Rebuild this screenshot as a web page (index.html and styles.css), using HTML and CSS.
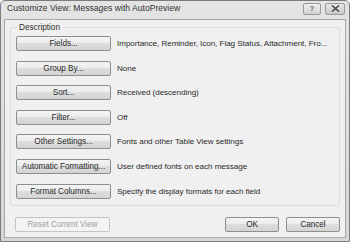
FILE: index.html
```html
<!DOCTYPE html>
<html>
<head>
<meta charset="utf-8">
<link rel="stylesheet" href="styles.css">
</head>
<body>
<div class="window">
  <div class="titlebar">
    <span class="title">Customize View: Messages with AutoPreview</span>
    <div class="caption-btns">
      <span class="cbtn help">?</span>
      <span class="cbtn close"><svg width="9" height="7" viewBox="0 0 9 7"><path d="M1 0.5 L8 6.5 M8 0.5 L1 6.5" stroke="#4a4a4a" stroke-width="1.6" fill="none"/></svg></span>
    </div>
  </div>
  <div class="client">
    <fieldset class="group">
      <legend class="legend">Description</legend>
      <div class="rows">
        <div class="row"><button class="btn">Fields...</button><span class="desc">Importance, Reminder, Icon, Flag Status, Attachment, Fro...</span></div>
        <div class="row"><button class="btn">Group By...</button><span class="desc">None</span></div>
        <div class="row"><button class="btn">Sort...</button><span class="desc">Received (descending)</span></div>
        <div class="row"><button class="btn">Filter...</button><span class="desc">Off</span></div>
        <div class="row"><button class="btn">Other Settings...</button><span class="desc">Fonts and other Table View settings</span></div>
        <div class="row"><button class="btn">Automatic Formatting...</button><span class="desc">User defined fonts on each message</span></div>
        <div class="row"><button class="btn">Format Columns...</button><span class="desc">Specify the display formats for each field</span></div>
      </div>
    </fieldset>
    <div class="footer">
      <button class="btn disabled">Reset Current View</button>
      <div class="spacer"></div>
      <button class="btn small">OK</button>
      <button class="btn small">Cancel</button>
    </div>
  </div>
</div>
</body>
</html>
```
FILE: styles.css
```css
html, body {
  margin: 0;
  padding: 0;
  background: #ffffff;
}
body {
  font-family: "Liberation Sans", Arial, sans-serif;
  color: #2a2a2a;
}
.window {
  width: 350px;
  height: 242px;
  box-sizing: border-box;
  border: 1px solid #7c7c7c;
  border-radius: 5px 5px 0 0;
  background: linear-gradient(#e4e4e4, #d6d6d6);
  display: flex;
  flex-direction: column;
}
.titlebar {
  height: 17px;
  display: flex;
  align-items: center;
  padding: 0 4px 0 6px;
  flex: none;
}
.title {
  font-size: 8.6px;
  color: #333;
  flex: 1;
  white-space: nowrap;
  margin-top: -3px;
}
.caption-btns {
  display: flex;
  gap: 4px;
  margin-top: -2px;
}
.cbtn {
  height: 10px;
  border: 1px solid #9a9a9a;
  border-radius: 2px;
  background: linear-gradient(#f0f0f0, #d2d2d2);
  display: flex;
  align-items: center;
  justify-content: center;
  font-size: 8px;
  font-weight: bold;
  color: #6a6a6a;
  box-sizing: content-box;
}
.help { width: 16px; }
.close { width: 18px; background: linear-gradient(#e8e8e8, #c8c8c8); }
.client {
  flex: 1;
  margin: 1px 3px 3px 3px;
  border: 1px solid #a8a8a8;
  background: #f0f0f0;
  display: flex;
  flex-direction: column;
  padding: 0 5px 0 5px;
}
.group {
  margin: 3px 0 0 0;
  border: 1px solid #dddddd;
  border-radius: 3px;
  padding: 4px 0 6px 5px;
  min-width: 0;
}
.legend {
  font-size: 8.2px;
  padding: 0 2px;
  margin-left: 1px;
  color: #2a2a2a;
}
.rows {
  display: flex;
  flex-direction: column;
  gap: 9.6px;
}
.row {
  display: flex;
  align-items: center;
  gap: 6px;
  height: 15px;
}
.btn {
  width: 95px;
  height: 15px;
  box-sizing: border-box;
  border: 1px solid #8e8e8e;
  border-radius: 2px;
  background: linear-gradient(#f4f4f4 0%, #ececec 45%, #dddddd 50%, #d4d4d4 100%);
  font-family: "Liberation Sans", Arial, sans-serif;
  font-size: 8.2px;
  letter-spacing: -0.05px;
  color: #2a2a2a;
  padding: 0;
  line-height: 13px;
  white-space: nowrap;
  flex: none;
}
.desc {
  font-size: 8.1px;
  letter-spacing: -0.05px;
  white-space: nowrap;
  color: #2a2a2a;
}
.footer {
  display: flex;
  align-items: center;
  margin-top: auto;
  margin-bottom: 5px;
  padding-left: 5px;
  gap: 7px;
}
.spacer { flex: 1; }
.btn.small { width: 54px; }
.btn.disabled {
  color: #a0a0a0;
  border-color: #c4c4c4;
  background: #f4f4f4;
}
```
